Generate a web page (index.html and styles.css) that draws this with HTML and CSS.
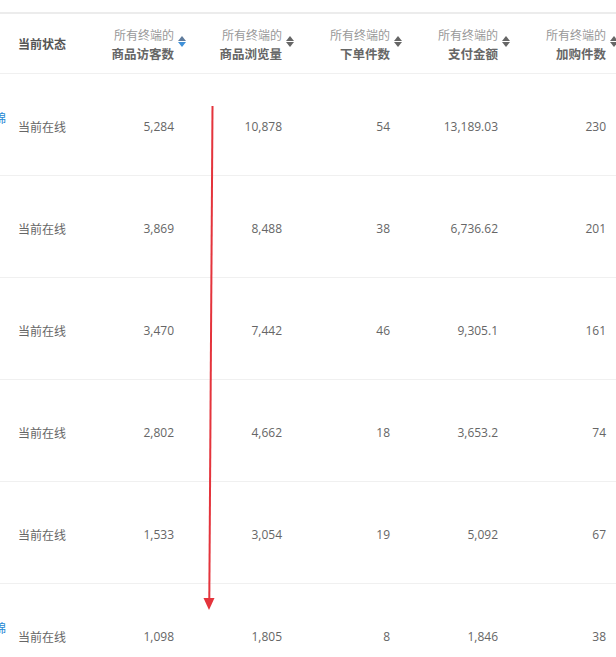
FILE: index.html
```html
<!DOCTYPE html>
<html lang="zh-CN">
<head>
<meta charset="utf-8">
<title>商品数据</title>
<link rel="stylesheet" href="styles.css">
</head>
<body>
<div class="page">
  <div class="viewport">
    <table class="grid">
      <colgroup>
        <col class="c-name"><col class="c-status"><col class="c-num"><col class="c-num"><col class="c-num"><col class="c-num"><col class="c-num">
      </colgroup>
      <thead>
        <tr>
          <th class="name"></th>
          <th class="status">当前状态</th>
          <th class="num"><div class="hcell"><div class="htext"><span class="sub">所有终端的</span><b>商品访客数</b></div><span class="sort active"><i class="up"></i><i class="down"></i></span></div></th>
          <th class="num"><div class="hcell"><div class="htext"><span class="sub">所有终端的</span><b>商品浏览量</b></div><span class="sort"><i class="up"></i><i class="down"></i></span></div></th>
          <th class="num"><div class="hcell"><div class="htext"><span class="sub">所有终端的</span><b>下单件数</b></div><span class="sort"><i class="up"></i><i class="down"></i></span></div></th>
          <th class="num"><div class="hcell"><div class="htext"><span class="sub">所有终端的</span><b>支付金额</b></div><span class="sort"><i class="up"></i><i class="down"></i></span></div></th>
          <th class="num"><div class="hcell"><div class="htext"><span class="sub">所有终端的</span><b>加购件数</b></div><span class="sort"><i class="up"></i><i class="down"></i></span></div></th>
        </tr>
      </thead>
      <tbody>
        <tr>
          <td class="name"><div class="nm"><span class="l1">新款秋冬加厚纯棉锦</span><span class="l2">女装</span></div></td>
          <td class="status">当前在线</td>
          <td class="num">5,284</td><td class="num">10,878</td><td class="num">54</td><td class="num">13,189.03</td><td class="num">230</td>
        </tr>
        <tr>
          <td class="name"></td>
          <td class="status">当前在线</td>
          <td class="num">3,869</td><td class="num">8,488</td><td class="num">38</td><td class="num">6,736.62</td><td class="num">201</td>
        </tr>
        <tr>
          <td class="name"></td>
          <td class="status">当前在线</td>
          <td class="num">3,470</td><td class="num">7,442</td><td class="num">46</td><td class="num">9,305.1</td><td class="num">161</td>
        </tr>
        <tr>
          <td class="name"></td>
          <td class="status">当前在线</td>
          <td class="num">2,802</td><td class="num">4,662</td><td class="num">18</td><td class="num">3,653.2</td><td class="num">74</td>
        </tr>
        <tr>
          <td class="name"></td>
          <td class="status">当前在线</td>
          <td class="num">1,533</td><td class="num">3,054</td><td class="num">19</td><td class="num">5,092</td><td class="num">67</td>
        </tr>
        <tr>
          <td class="name"><div class="nm"><span class="l1">春季新品纯色针织锦</span><span class="l2">棉衫</span></div></td>
          <td class="status">当前在线</td>
          <td class="num">1,098</td><td class="num">1,805</td><td class="num">8</td><td class="num">1,846</td><td class="num">38</td>
        </tr>
      </tbody>
    </table>
  </div>
  <svg class="arrow" width="616" height="657" viewBox="0 0 616 657" aria-hidden="true">
    <line x1="212.5" y1="106" x2="209.3" y2="600" stroke="#e4343c" stroke-width="2"/>
    <polygon points="203.5,598 214.5,598 209,610" fill="#e4343c"/>
  </svg>
</div>
</body>
</html>
```

FILE: styles.css
```css
html, body {
  margin: 0;
  padding: 0;
  background: #fff;
}

.page {
  position: relative;
  width: 616px;
  height: 657px;
  overflow: hidden;
  padding-top: 12px;
  box-sizing: border-box;
  font-family: "Open Sans", "Noto Sans CJK SC", sans-serif;
  font-size: 12px;
  color: #666;
}

.viewport {
  overflow: hidden;
  width: 616px;
}

.grid {
  border-collapse: collapse;
  table-layout: fixed;
  width: 716px;
  margin-left: -94px;
  border-top: 2px solid #ececec;
}

.c-name { width: 100px; }
.c-status { width: 76px; }
.c-num { width: 108px; }

.grid th,
.grid td {
  padding: 0;
  border-bottom: 1px solid #f0f0f0;
  vertical-align: middle;
  white-space: nowrap;
}

.grid thead th {
  height: 59px;
  font-weight: normal;
}

.grid tbody td {
  height: 97px;
  padding-top: 4px;
}

.status {
  text-align: left;
  padding-left: 12px !important;
  font-family: "Noto Sans CJK SC", sans-serif;
}

th.status {
  font-weight: bold !important;
  color: #555;
}

td.status {
  color: #666;
}

.num {
  text-align: right;
  padding-right: 16px !important;
  color: #666;
}

.name {
  overflow: hidden;
}

.nm {
  display: flex;
  flex-direction: column;
  align-items: flex-end;
  font-family: "Noto Sans CJK SC", sans-serif;
  color: #2a8ad4;
  line-height: 18px;
}

.nm .l2 {
  align-self: flex-start;
}

.hcell {
  display: flex;
  justify-content: flex-end;
  align-items: center;
  margin-right: -13px;
}

.htext {
  display: flex;
  flex-direction: column;
  align-items: flex-end;
  font-family: "Noto Sans CJK SC", sans-serif;
  line-height: 19px;
}

.htext .sub {
  color: #999;
  font-size: 12px;
}

.htext b {
  color: #666;
  font-size: 12.5px;
  font-weight: bold;
}

.sort {
  display: flex;
  flex-direction: column;
  gap: 1px;
  margin-left: 4px;
  margin-top: -4px;
  width: 9px;
}

.sort i {
  display: block;
  width: 0;
  height: 0;
  border-left: 4.5px solid transparent;
  border-right: 4.5px solid transparent;
}

.sort .up {
  border-bottom: 5px solid #666;
}

.sort .down {
  border-top: 5px solid #666;
}

.sort.active .up {
  border-bottom-color: #5f7b9c;
}

.sort.active .down {
  border-top-color: #3f90d8;
}

.arrow {
  position: absolute;
  left: 0;
  top: 0;
  pointer-events: none;
}
```
